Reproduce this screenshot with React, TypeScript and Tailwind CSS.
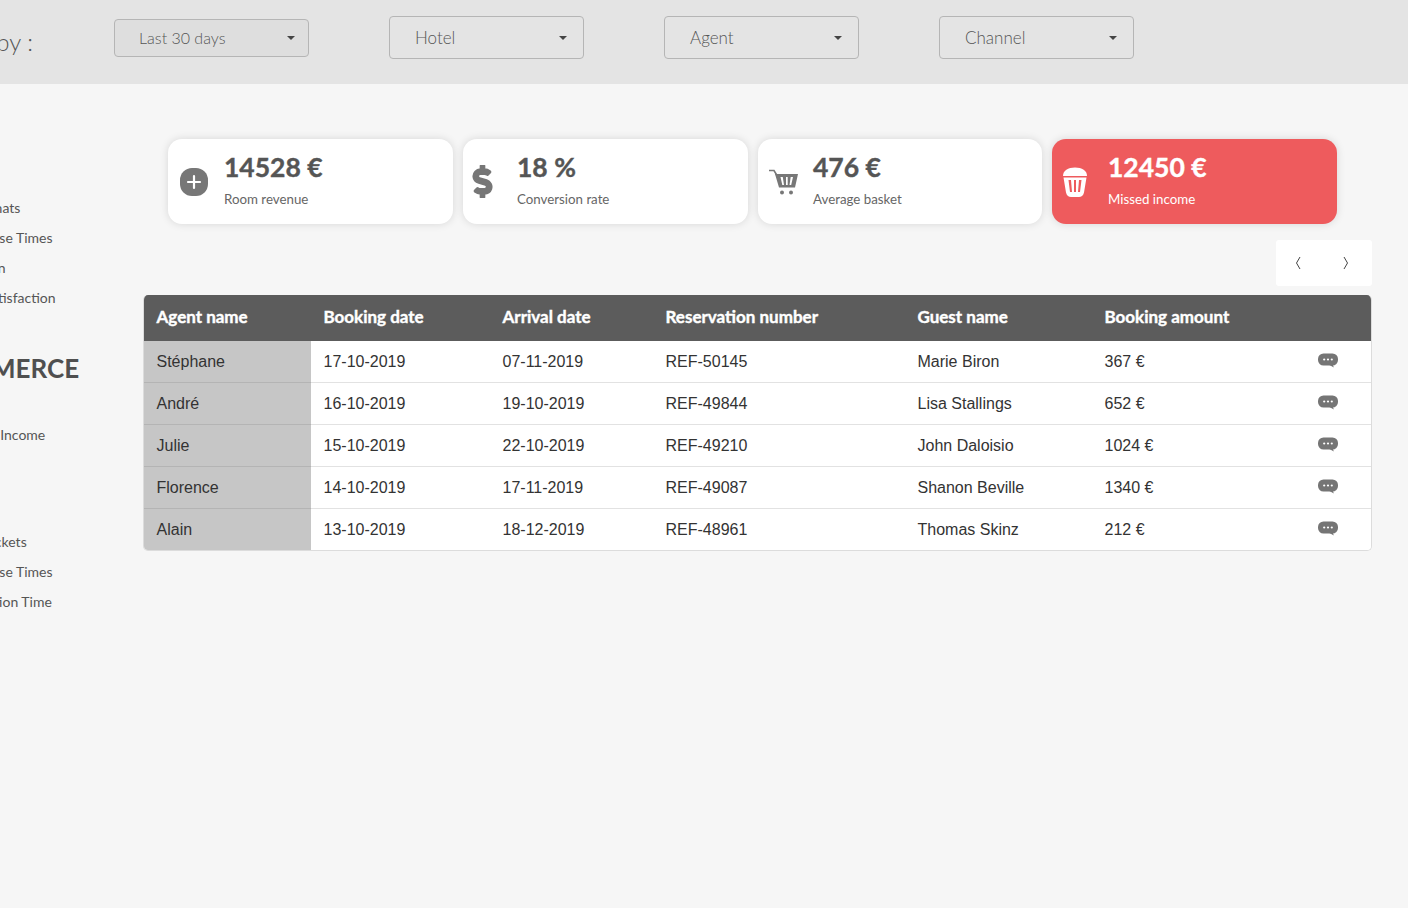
import { FaDollarSign } from 'react-icons/fa';

const SIDE_TOP = [
  { label: 'Total Chats', offset: 'ml-[-48px]' },
  { label: 'Response Times', offset: 'ml-[-46px]' },
  { label: 'Conversion', offset: 'ml-[-64px]' },
  { label: 'Chat Satisfaction', offset: 'ml-[-49px]' },
];

const SIDE_BOTTOM = [
  { label: 'Open Tickets', offset: 'ml-[-54px]' },
  { label: 'Response Times', offset: 'ml-[-46px]' },
  { label: 'Resolution Time', offset: 'ml-[-47px]' },
];

const FILTERS = ['Hotel', 'Agent', 'Channel'];

const ROWS = [
  { agent: 'Stéphane', booking: '17-10-2019', arrival: '07-11-2019', ref: 'REF-50145', guest: 'Marie Biron', amount: '367 €' },
  { agent: 'André', booking: '16-10-2019', arrival: '19-10-2019', ref: 'REF-49844', guest: 'Lisa Stallings', amount: '652 €' },
  { agent: 'Julie', booking: '15-10-2019', arrival: '22-10-2019', ref: 'REF-49210', guest: 'John Daloisio', amount: '1024 €' },
  { agent: 'Florence', booking: '14-10-2019', arrival: '17-11-2019', ref: 'REF-49087', guest: 'Shanon Beville', amount: '1340 €' },
  { agent: 'Alain', booking: '13-10-2019', arrival: '18-12-2019', ref: 'REF-48961', guest: 'Thomas Skinz', amount: '212 €' },
];

function PlusIcon() {
  return (
    <svg width="28" height="28" viewBox="0 0 28 28" className="shrink-0">
      <rect width="28" height="28" rx="12" fill="#777777" />
      <path d="M14 8v12M8 14h12" stroke="#fff" strokeWidth="2.2" strokeLinecap="round" />
    </svg>
  );
}

function CartIcon() {
  return (
    <svg width="29" height="26" viewBox="0 0 29 26" className="shrink-0">
      <path d="M0 1.500h5l3 5" fill="none" stroke="#777777" strokeWidth="1.600" />
      <path fillRule="evenodd" d="M6 5h23l-3 13.500H10Z M11.500 8l1.800 8h1.700l-1.200-8Z M17 8v8h1.700V8Z M24 8l-1.800 8h-1.700l1.200-8Z" fill="#777777" />
      <circle cx="13" cy="23.500" r="2" fill="#777777" />
      <circle cx="22" cy="23.500" r="2" fill="#777777" />
    </svg>
  );
}

function TrashIcon() {
  return (
    <svg width="26" height="30" viewBox="0 0 26 30" className="shrink-0">
      <path d="M1 9C1 3.500 6 0.500 13 0.500s12 3 12 8.500Z" fill="#fff" />
      <path fillRule="evenodd" d="M1.500 10.500h23L22 25.500c-.5 3-3 4.500-5 4.500H9c-2 0-4.500-1.500-5-4.500Z M6.500 13l1.500 12h2L9 13Z M12 13v12h2V13Z M19.500 13L18 25h-2l1-12Z" fill="#fff" />
    </svg>
  );
}

function ChatIcon() {
  return (
    <svg width="20" height="16" viewBox="0 0 20 16" className="block">
      <rect y="0.500" width="20" height="12" rx="5.500" fill="#757575" />
      <path d="M11.500 12h3.500l.8 2.600Z" fill="#757575" />
      <circle cx="6.200" cy="6.500" r="1.100" fill="#fff" />
      <circle cx="10" cy="6.500" r="1.100" fill="#fff" />
      <circle cx="13.800" cy="6.500" r="1.100" fill="#fff" />
    </svg>
  );
}

function Caret() {
  return <span className="w-0 h-0 border-x-[4px] border-x-transparent border-t-[4px] border-t-[#444444]" />;
}

function StatCard({ value, label, icon, width, slot, danger }: { value: string; label: string; icon: React.ReactNode; width: string; slot: string; danger?: boolean }) {
  return (
    <div
      className={`${width} h-[85px] rounded-[14px] shadow-[0_0_8px_rgba(0,0,0,0.13)] flex items-center ${
        danger ? 'bg-[#ee5b5d] text-white' : 'bg-white text-[#555555]'
      }`}
    >
      <div className={`${slot} shrink-0 flex items-center`}>{icon}</div>
      <div className="flex flex-col pb-[5px]">
        <span className="text-[26.5px] leading-[32px] font-bold [-webkit-text-stroke:0.4px_currentColor]">{value}</span>
        <span className={`text-[13.300px] leading-[16px] mt-[8px] ${danger ? 'text-white' : 'text-[#666666]'}`}>{label}</span>
      </div>
    </div>
  );
}

export default function App() {
  const bodyCell = 'pl-[12.500px] border-b border-[#e2e2e2]';
  return (
    <div className="w-[1408px] h-[908px] overflow-hidden bg-[#f6f6f6] font-['Lato',sans-serif]">
      {/* Filter bar */}
      <div className="h-[84px] bg-[#e4e4e4] flex items-start">
        <div className="w-[33px] flex justify-end mt-[26px] shrink-0">
          <span className="text-[24px] leading-[32px] text-[#555555] whitespace-nowrap font-light">Filter by :</span>
        </div>
        <div className="flex gap-[80px] ml-[81px] mt-[16px] items-center h-[43px]">
          <div className="w-[195px] h-[38px] rounded-[4px] border border-[#b5b5b5] bg-[#dedede] flex items-center justify-between pl-[24px] pr-[13px]">
            <span className="text-[16px] font-light text-[#555555]">Last 30 days</span>
            <Caret />
          </div>
          {FILTERS.map((f) => (
            <div key={f} className="w-[195px] h-[43px] rounded-[4px] border border-[#b5b5b5] flex items-center justify-between pl-[25px] pr-[16px]">
              <span className="text-[17px] font-light text-[#555555]">{f}</span>
              <Caret />
            </div>
          ))}
        </div>
      </div>

      <div className="flex">
        {/* Sidebar, scrolled off to the left */}
        <aside className="w-[143px] shrink-0 overflow-hidden text-[14px] leading-[30px] text-[#555555] whitespace-nowrap pt-[109px]">
          {SIDE_TOP.map((item) => (
            <div key={item.label} className={item.offset}>{item.label}</div>
          ))}
          <div className="ml-[-96px] mt-[38px] text-[26px] leading-[34px] font-bold text-[#4f4f4f]">E-COMMERCE</div>
          <div className="ml-[-47px] mt-[35px]">Missed Income</div>
          <div className="mt-[77px]">
            {SIDE_BOTTOM.map((item) => (
              <div key={item.label} className={item.offset}>{item.label}</div>
            ))}
          </div>
        </aside>

        <main className="w-[1229px] pt-[55px]">
          <div className="flex gap-[10px] ml-[25px]">
            <StatCard width="w-[285px]" slot="w-[56px] pl-[12px]" value="14528 €" label="Room revenue" icon={<PlusIcon />} />
            <StatCard width="w-[285px]" slot="w-[54px] pl-[3px]" value="18 %" label="Conversion rate" icon={<FaDollarSign size={33} color="#777777" stroke="#777777" strokeWidth={24} />} />
            <StatCard width="w-[284px]" slot="w-[55px] pl-[11px]" value="476 €" label="Average basket" icon={<CartIcon />} />
            <StatCard width="w-[285px]" slot="w-[56px] pl-[10px]" value="12450 €" label="Missed income" icon={<TrashIcon />} danger />
          </div>

          <div className="flex justify-end mt-[16px]">
            <div className="w-[96px] h-[46px] bg-white rounded-[3px] flex items-center justify-between pl-[18px] pr-[22px]">
              <svg width="8" height="14" viewBox="0 0 8 14">
                <path d="M6 1 2.500 7 6 13" fill="none" stroke="#444444" strokeWidth="1" />
              </svg>
              <svg width="8" height="14" viewBox="0 0 8 14">
                <path d="M2 1l3.500 6L2 13" fill="none" stroke="#444444" strokeWidth="1" />
              </svg>
            </div>
          </div>

          <div className="mt-[9px] w-[1229px] rounded-[5px] overflow-hidden border-x border-b border-[#dcdcdc]">
            <table className="w-full table-fixed border-separate border-spacing-0 font-['Liberation_Sans',sans-serif] text-[16px] text-[#333333]">
              <colgroup>
                <col className="w-[167px]" />
                <col className="w-[179px]" />
                <col className="w-[163px]" />
                <col className="w-[252px]" />
                <col className="w-[187px]" />
                <col className="w-[213px]" />
                <col />
              </colgroup>
              <thead>
                <tr className="h-[46px] bg-[#5c5c5c] text-white text-left font-['Lato',sans-serif] text-[17px] font-black [-webkit-text-stroke:0.4px_white]">
                  <th className="pl-[12.500px] pb-[2px]">Agent name</th>
                  <th className="pl-[12.500px] pb-[2px]">Booking date</th>
                  <th className="pl-[12.500px] pb-[2px]">Arrival date</th>
                  <th className="pl-[12.500px] pb-[2px]">Reservation number</th>
                  <th className="pl-[12.500px] pb-[2px]">Guest name</th>
                  <th className="pl-[12.500px] pb-[2px]">Booking amount</th>
                  <th />
                </tr>
              </thead>
              <tbody>
                {ROWS.map((row, i) => {
                  const last = i === ROWS.length - 1;
                  const cell = last ? 'pl-[12.500px]' : bodyCell;
                  return (
                    <tr key={row.ref} className={`${last ? 'h-[41px]' : 'h-[42px]'} bg-white`}>
                      <td className={`pl-[12.500px] bg-[#c6c6c6] ${last ? '' : 'border-b border-[#b4b4b4]'}`}>{row.agent}</td>
                      <td className={cell}>{row.booking}</td>
                      <td className={cell}>{row.arrival}</td>
                      <td className={cell}>{row.ref}</td>
                      <td className={cell}>{row.guest}</td>
                      <td className={cell}>{row.amount}</td>
                      <td className={`pl-[13px] pb-[2px] ${last ? '' : 'border-b border-[#e2e2e2]'}`}><ChatIcon /></td>
                    </tr>
                  );
                })}
              </tbody>
            </table>
          </div>
        </main>
      </div>
    </div>
  );
}
